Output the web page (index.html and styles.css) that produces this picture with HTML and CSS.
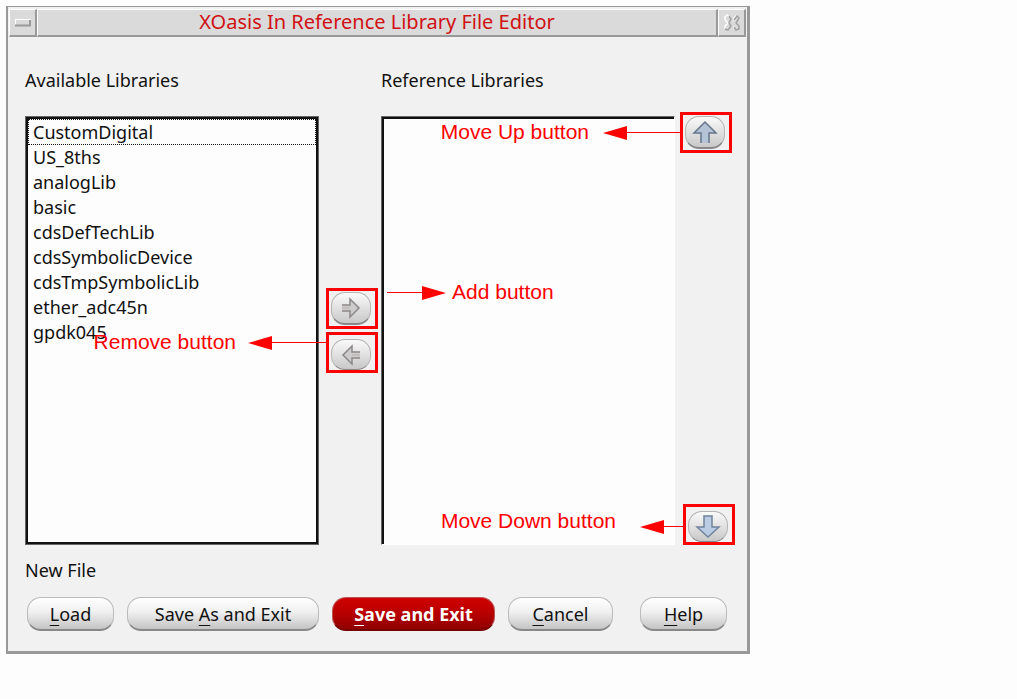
FILE: index.html
```html
<!DOCTYPE html>
<html lang="en">
<head>
<meta charset="utf-8">
<title>XOasis In Reference Library File Editor</title>
<link rel="stylesheet" href="styles.css">
</head>
<body>
<main class="window">
  <header class="titlebar">
    <button class="title-button" type="button" aria-label="Minimize"><svg width="16" height="8" viewBox="0 0 16 8"><path d="M0 7V0H16" fill="none" stroke="#fff" stroke-width="2"/><path d="M0 6.5H15V1" fill="none" stroke="#999" stroke-width="2"/></svg></button>
    <h1 class="title">XOasis In Reference Library File Editor</h1>
    <button class="title-button" type="button" aria-label="Close"><svg width="18" height="18" viewBox="0 0 18 18" fill="none"><path d="M7 3L4 1L2 3V6L5 9L2 12V15M11 7V4L14 1M11 15V12" stroke="#fff" stroke-width="1.5"/><path d="M6 2L8 5L6 9L8 12L5 16L2 15M11 6L14 2L16 4L13 9L16 12V15L13 16L11 13" stroke="#a2a2a2" stroke-width="1.5"/></svg></button>
  </header>
  <form class="content">
    <div class="panels">
      <label class="label" for="available">Available Libraries</label>
      <label class="label label-reference" for="reference">Reference Libraries</label>
      <select class="list" id="available" multiple>
        <option class="item item-current">CustomDigital</option>
        <option class="item">US_8ths</option>
        <option class="item">analogLib</option>
        <option class="item">basic</option>
        <option class="item">cdsDefTechLib</option>
        <option class="item">cdsSymbolicDevice</option>
        <option class="item">cdsTmpSymbolicLib</option>
        <option class="item">ether_adc45n</option>
        <option class="item">gpdk045</option>
      </select>
      <div class="transfer">
        <div class="mark">
          <button class="arrow-button" type="button" aria-label="Add"><svg width="22" height="22" viewBox="0 0 22 22"><path d="M2 8H10V2L20 11L10 20V14H2Z" fill="#ccc"/><path d="M2 8H10V2L19 11L10 20V14H2" fill="none" stroke="#8d8888" stroke-width="1.5"/><path d="M2 11H10" stroke="#b9adad"/></svg></button>
          <div class="callout callout-right"><svg class="pointer" width="59" height="14" viewBox="0 0 59 14"><path d="M0 6.5H40" stroke="#f00"/><path d="M35 0L59 7L35 14Z" fill="#f00"/></svg><span class="callout-text">Add button</span></div>
        </div>
        <div class="mark">
          <button class="arrow-button button-low" type="button" aria-label="Remove"><svg width="22" height="22" viewBox="0 0 22 22"><path d="M20 8H12V2L2 11L12 20V14H20Z" fill="#ccc"/><path d="M20 8H12V2L3 11L12 20V14H20" fill="none" stroke="#8d8888" stroke-width="1.5"/><path d="M20 11H12" stroke="#b9adad"/></svg></button>
          <div class="callout callout-left callout-remove"><span class="callout-text">Remove button</span><svg class="pointer" width="78" height="14" viewBox="0 0 78 14"><path d="M20 6.5H78" stroke="#f00"/><path d="M24 0L0 7L24 14Z" fill="#f00"/></svg></div>
        </div>
      </div>
      <select class="list list-sunken" id="reference" multiple></select>
      <div class="order">
        <div class="mark">
          <button class="arrow-button" type="button" aria-label="Move Up"><svg width="26" height="24" viewBox="0 0 26 24"><path d="M13 2L24 13H17V23H9V13H2Z" fill="#b4c3d6"/><path d="M9 23V13H2L13 2L24 13H17V23" fill="none" stroke="#65758c" stroke-width="1.5"/></svg></button>
          <div class="callout callout-left"><span class="callout-text">Move Up button</span><svg class="pointer" width="77" height="14" viewBox="0 0 77 14"><path d="M20 6.5H77" stroke="#f00"/><path d="M24 0L0 7L24 14Z" fill="#f00"/></svg></div>
        </div>
        <div class="mark mark-down">
          <button class="arrow-button button-low" type="button" aria-label="Move Down"><svg width="26" height="24" viewBox="0 0 26 24"><path d="M13 22L24 12H17V1H9V12H2Z" fill="#b9cce3"/><path d="M9 1V12H2L13 22L24 12H17V1Z" fill="none" stroke="#71839d" stroke-width="1.5"/></svg></button>
          <div class="callout callout-left callout-low"><span class="callout-text">Move Down button</span><svg class="pointer" width="43" height="14" viewBox="0 0 43 14"><path d="M20 6.5H43" stroke="#f00"/><path d="M24 0L0 7L24 14Z" fill="#f00"/></svg></div>
        </div>
      </div>
    </div>
    <p class="status">New File</p>
    <div class="actions">
      <button class="action" type="button"><u>L</u>oad</button>
      <button class="action action-wide" type="button">Save <u>A</u>s and Exit</button>
      <button class="action action-primary" type="button"><u>S</u>ave and Exit</button>
      <button class="action action-cancel" type="button"><u>C</u>ancel</button>
      <button class="action action-help" type="button"><u>H</u>elp</button>
    </div>
  </form>
</main>
</body>
</html>
```

FILE: styles.css
```css
* {
  box-sizing: border-box;
}

body {
  margin: 0;
  padding: 6px 0 45px 6px;
  min-height: 100vh;
  display: grid;
  grid-template-columns: 744fr 267fr;
  background: #fdfdfd;
  color: #111;
  font: 18px/24px "Noto Sans", "Open Sans", sans-serif;
}

.window {
  display: flex;
  flex-direction: column;
  min-width: 640px;
  padding: 2px 1px 1px;
  border: solid #999;
  border-width: 1px 3px 3px 2px;
  background: #f1f1f2;
}

.titlebar {
  display: flex;
  height: 28px;
}

.title,
.title-button {
  margin: 0;
  border: solid;
  border-width: 1px 2px 2px 1px;
  border-color: #fff #999 #999 #fff;
  background: #dadada;
}

.title {
  flex: 1;
  color: #d11014;
  font-size: 20px;
  font-weight: 400;
  line-height: 24px;
  text-align: center;
}

.title-button {
  width: 28px;
  padding: 0;
  display: grid;
  place-items: center;
}

.content {
  flex: 1;
  display: flex;
  flex-direction: column;
  padding: 31px 0 19px 16px;
}

.panels {
  flex: 1;
  display: grid;
  grid-template-columns: 1fr 62px 1fr 71px;
  grid-template-rows: 24px 1fr;
  row-gap: 24px;
}

.label-reference {
  grid-column: 3 / 5;
}

.list {
  width: 100%;
  height: 100%;
  min-height: 230px;
  padding: 2px;
  overflow: hidden;
  appearance: none;
  border: 1px solid #666;
  border-radius: 0;
  outline: 0;
  background: #fdfdfd;
  box-shadow: inset 0 0 0 2px #111;
  color: #111;
  font: inherit;
}

.list-sunken {
  border-right-color: #fff;
  border-bottom-color: #fff;
  box-shadow: inset 2px 2px #111;
}

.item {
  min-height: 25px;
  padding: 0 5px;
  line-height: 24px;
}

.item-current {
  border: 1px dotted #111;
  padding: 0 4px;
  line-height: 22px;
}

.transfer,
.order {
  display: flex;
  flex-direction: column;
}

.transfer {
  justify-content: center;
  gap: 3px;
  padding-left: 7px;
}

.order {
  justify-content: space-between;
  margin-top: -4px;
  padding-left: 5px;
}

.mark {
  position: relative;
  width: 52px;
  height: 41px;
  padding: 1px 2px 0;
  border: 3px solid #f00;
}

.mark-down {
  margin-left: 3px;
}

.arrow-button {
  display: grid;
  place-items: center;
  width: 40px;
  height: 33px;
  padding: 0;
  border: 1px solid #b5b5b5;
  border-bottom: 2px solid #888;
  border-radius: 14px;
  background: linear-gradient(#fafafa, #c8c8c8);
}

.button-low {
  margin-top: 3px;
  height: 31px;
  border-bottom-width: 1px;
}

.callout {
  position: absolute;
  top: 5px;
  display: flex;
  align-items: center;
  color: #f00;
  font: 21px/24px "Liberation Sans", Arial, sans-serif;
  white-space: nowrap;
  pointer-events: none;
}

.callout-left {
  right: 100%;
  margin-right: 3px;
  gap: 14px;
}

.callout-right {
  top: -11px;
  left: 100%;
  margin-left: 12px;
  gap: 6px;
}

.callout-remove {
  top: -5px;
  gap: 12px;
}

.callout-low {
  top: 7px;
  gap: 24px;
}

.callout-text {
  padding-bottom: 2px;
}

.callout-low .callout-text {
  padding-bottom: 7px;
  margin-top: -5px;
}

.pointer {
  flex: none;
}

.status {
  margin: 13px 0 15px;
}

.actions {
  display: flex;
  gap: 13px;
  padding: 0 19px 0 2px;
}

.action {
  width: 87px;
  height: 34px;
  padding: 0;
  border: 1px solid #bbb;
  border-bottom: 2px solid #888;
  border-radius: 14px;
  background: linear-gradient(#fff, #f0f0f0 45%, #c4c4c4);
  color: #111;
  font: inherit;
  white-space: nowrap;
}

.action u {
  text-underline-offset: 4px;
  text-decoration-thickness: 1px;
}

.action-wide {
  width: 192px;
}

.action-primary {
  width: 163px;
  border-color: #b55;
  border-bottom-color: #700;
  background: linear-gradient(#d00000, #b80000 50%, #900000);
  color: #fff;
  font-weight: 700;
}

.action-cancel {
  width: 105px;
}

.action-help {
  margin-left: auto;
}
```
